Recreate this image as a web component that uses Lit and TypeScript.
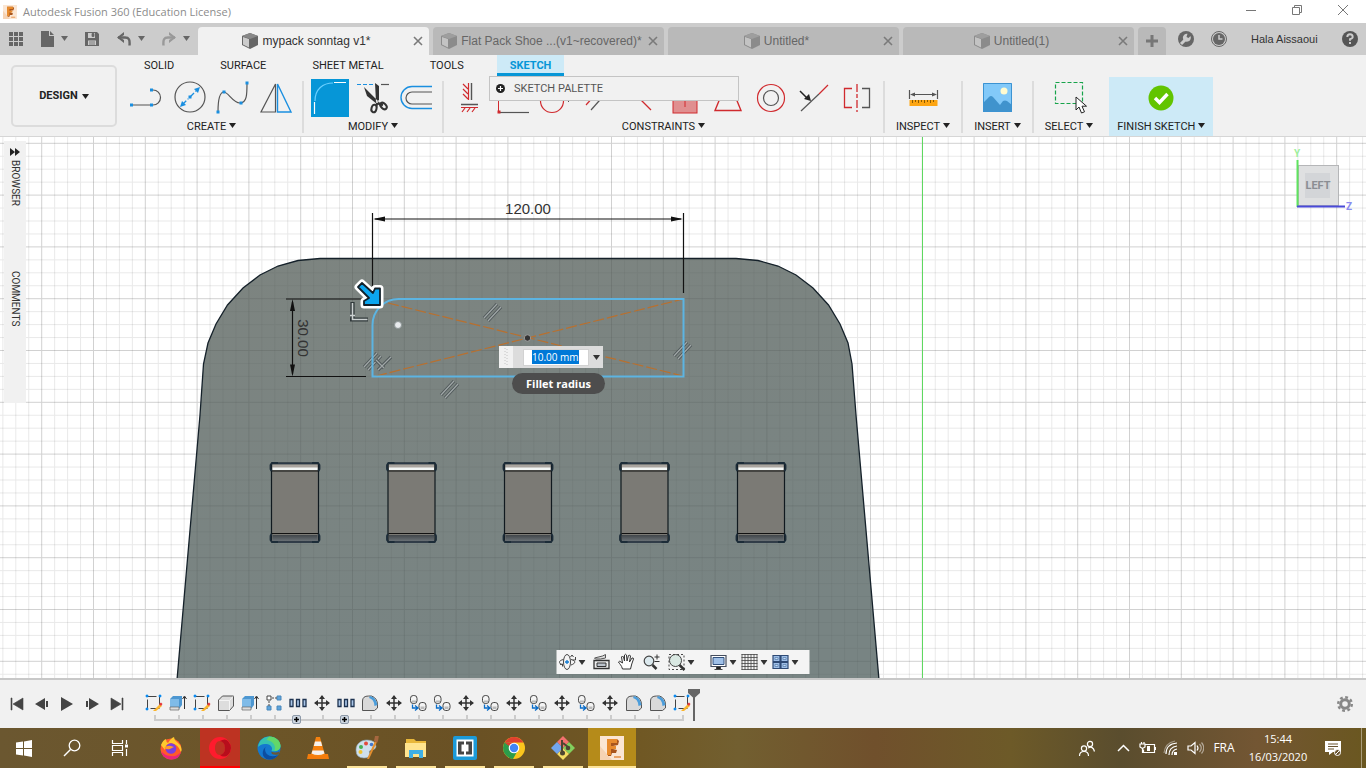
import { LitElement, html, svg, css, type TemplateResult } from "lit";
import { customElement, property, query } from "lit/decorators.js";
import { classMap } from "lit/directives/class-map.js";

type Art = TemplateResult;

const icon = (w: number, h: number, art: Art) =>
  html`<svg class="ico" width=${w} height=${h} viewBox="0 0 ${w} ${h}" aria-hidden="true">${art}</svg>`;

const caret = (cls = "") => html`<svg class="caret ${cls}" width="7" height="5" viewBox="0 0 7 5" aria-hidden="true"><path d="M0 0h7L3.5 5z" fill="currentColor" /></svg>`;

/* ---------- title and tab bar ---------- */

const fusionLogo = svg`
  <rect width="24" height="24" fill="#fbe6d3" />
  <path d="M0 24V10L12 24z" fill="#f6d3b4" />
  <path d="M7 3h10l2 2-1 4-5 1v3l4 1-1 3h-4l-1 3H8z" fill="#a9551c" />
  <path d="M7 3h10v4h-6v3h5v3h-5v6H7z" fill="#e88b2d" />
  <path d="M14 20h7v2h-7z" fill="#eba467" />`;

const apps = svg`${[0, 5, 10].map((y) => [0, 5, 10].map((x) => svg`<rect x=${x} y=${y} width="4" height="4" fill="#666" />`))}`;
const doc = svg`<path d="M0 0h8v5h5v11H0z" fill="#666" /><path d="M9 0l4 4H9z" fill="#666" />`;
const save = svg`<path d="M0 0h12l2 2v12H0z" fill="#666" /><path d="M3 1h7v5H3zM3 8.500h8V13H3z" fill="#ccc" /><path d="M7 1.500h2v3H7zM4 10h6M4 12h6" fill="#666" stroke="#666" stroke-width=".8" />`;
const undo = svg`<path d="M1 5.500h7c4 0 5 2 4.500 8" fill="none" stroke="#666" stroke-width="2.400" /><path d="M7 0v3L3 5.500 7 8v3L0 5.500z" fill="#666" />`;
const redo = svg`<path d="M13 5.500H6c-4 0-5 2-4.500 8" fill="none" stroke="#999" stroke-width="2.400" /><path d="M7 0v3l4 2.500L7 8v3l7-5.500z" fill="#999" />`;
const cube = svg`<path d="M0 3L8 0l8 3v9l-8 4-8-4z" fill="#666" /><path d="M1 4l6 2v8.500L1 11.500z" fill="#ccc" /><path d="M0 3L8 0l8 3-8 3z" fill="#888" />`;
const close = svg`<path d="M1 1l8 8M9 1L1 9" stroke="#7a7a7a" stroke-width="1.600" fill="none" />`;
const wrench = svg`<circle cx="8" cy="8" r="8" fill="#666" /><path d="M3 13l5-5" stroke="#ccc" stroke-width="3" /><path d="M12.500 5a4 4 0 1 1-3-2.300L8.500 6l2 1z" fill="#ccc" />`;
const clock = svg`<circle cx="8" cy="8" r="7.500" fill="none" stroke="#666" /><circle cx="8" cy="8" r="6" fill="#666" /><path d="M8 4v4h3.500" fill="none" stroke="#ccc" stroke-width="1.500" />`;

/* ---------- ribbon ---------- */

const G = "#555";
const B = "#1a8fe0";
const R = "#d02a2e";
const sq = (x: number, y: number, c = B) => svg`<rect x=${x - 1.5} y=${y - 1.5} width="3" height="3" fill=${c} />`;

const create: Art[] = [
  svg`<path d="M3 26h20M23 11h2a7 7 0 0 1 0 15h-2" fill="none" stroke=${G} stroke-width="1.200" />${sq(3.5, 26)}${sq(23.5, 26)}${sq(23.5, 11)}`,
  svg`<circle cx="19" cy="18" r="15" fill="none" stroke=${G} stroke-width="1.200" /><path d="M11 26L27 10" stroke=${B} stroke-width="1.300" stroke-dasharray="6 2 1 2" /><path d="M29 8l-6 2 4 4zM9 28l6-2-4-4z" fill=${B} />${sq(19, 18)}`,
  svg`<path d="M4 33C4 20 6 13 10 13S19 24 26 24 33 15 33 4" fill="none" stroke=${G} stroke-width="1.200" />${sq(4, 33)}${sq(10, 13)}${sq(27, 24)}${sq(33, 4)}`,
  svg`<path d="M18.500 5v28H4z" fill="none" stroke=${G} stroke-width="1.200" /><path d="M20.500 5v28H34z" fill="none" stroke=${B} stroke-width="1.400" />`,
];

const modify: Art[] = [
  svg`<path d="M4 22C4 10 12 4 22 4" fill="none" stroke="#6bd0ff" stroke-width="1.200" /><path d="M23 3.500h12M3.500 23v12" stroke="#fff" stroke-width="1.200" />`,
  svg`<path d="M3 5.500h17" stroke=${B} stroke-width="1.200" stroke-dasharray="4 2" /><path d="M27 5.500h8" stroke=${G} stroke-width="1.200" /><path d="M10 8l3 9 10 8 1.500-2.500zM21 4l4 3v14l-3 2z" fill="#333" /><path d="M23 24l6 2M24 23l-2 4" stroke="#333" stroke-width="2.400" /><ellipse cx="20" cy="29.500" rx="2.500" ry="3.800" fill="none" stroke="#333" stroke-width="2" transform="rotate(15 20 29.500)" /><ellipse cx="29.500" cy="27" rx="2.500" ry="3.800" fill="none" stroke="#333" stroke-width="2" transform="rotate(-45 29.500 27)" /><circle cx="23" cy="23" r="1" fill="#eee" />`,
  svg`<path d="M35 7.500H15a11 11 0 0 0 0 22h20" fill="none" stroke=${B} stroke-width="1.400" /><path d="M35 13h-20a6 6 0 0 0 0 12h20" fill="none" stroke=${G} stroke-width="1.200" />`,
];

const constraints: Art[] = [
  svg`<path d="M17.500 4v17" stroke=${R} stroke-width="1.200" /><path d="M20.500 4v17M10 25.500h17" stroke=${G} stroke-width="1.400" /><path d="M17 10l-5-5M17 15l-5-5M17 20l-5-5M10 28.500h17M14 29l-3 4M19 29l-3 4M24 29l-3 4" stroke=${R} stroke-width="1.200" fill="none" />`,
  svg`<path d="M4.500 5v27" stroke=${R} /><path d="M5 33.500h30" stroke=${G} stroke-width="1.200" />${sq(5, 33, R)}`,
  svg`<circle cx="15" cy="22" r="11.500" fill="none" stroke=${R} stroke-width="1.200" /><path d="M31 23l3-3" stroke=${G} />`,
  svg`<path d="M6 26L22 8" stroke=${R} stroke-width="1.200" /><path d="M11 31L27 13" stroke=${G} stroke-width="1.200" />`,
  svg`<path d="M3 6l25 25" stroke=${R} stroke-width="1.200" />`,
  svg`<rect x="7" y="9" width="24" height="25" fill="#e08f90" stroke=${R} /><path d="M19 15v13" stroke=${R} />`,
  svg`<path d="M6 31.500h26L24 12H14z" fill="none" stroke=${R} stroke-width="1.400" />`,
  svg`<circle cx="19" cy="19" r="13.500" fill="none" stroke=${R} stroke-width="1.200" /><circle cx="19" cy="19" r="7.500" fill="none" stroke=${G} stroke-width="1.200" />`,
  svg`<path d="M6 32l18-17" stroke=${G} stroke-width="1.200" /><path d="M24 15L33 6" stroke=${R} stroke-width="1.200" /><path d="M5 12l7 7" stroke="#222" stroke-width="1.500" /><path d="M16 22l-7-2 5-5z" fill="#222" />`,
  svg`<path d="M14 9.500H6.500v19H14" fill="none" stroke=${R} stroke-width="1.300" /><path d="M19 5v28" stroke=${R} stroke-width="1.300" stroke-dasharray="8 2 4 2" /><path d="M24 9.500h7.500v19H24" fill="none" stroke=${G} stroke-width="1.300" />`,
];

const measure = svg`<rect x="5.500" y="21" width="28" height="6" fill="#fda512" /><path d="M8.500 21v3M11.500 21v2M14.500 21v3M17.500 21v2M20.500 21v3M23.500 21v2M26.500 21v3M29.500 21v2" stroke="#8a5a00" /><path d="M5.500 11v9M33.500 11v9M8 15.500h23" stroke=${G} stroke-width="1.200" /><path d="M6 15.500l5-2v4zM33 15.500l-5-2v4z" fill=${G} />`;
const picture = svg`<rect x="5" y="4" width="29" height="29" fill="#82c9f9" /><path d="M5 24l6-6q2-2 4 0l7 8 3-4q2-1 4 0l5 4v7H5z" fill="#4093cd" /><path d="M5.500 4.500h28v28h-28z" stroke="#3c93d2" fill="none" /><circle cx="26" cy="12" r="3.500" fill="#fffbd0" />`;
const selectBox = svg`<rect x="5.500" y="3.500" width="27" height="21" fill="none" stroke="#16a34a" stroke-width="1.200" stroke-dasharray="4 2" /><path d="M26 18v13l3-3 2.500 6 3-1.200-2.500-5.600h4.500z" fill="#fff" stroke="#222" />`;
const check = svg`<circle cx="19" cy="19" r="12.500" fill="#62c400" /><path d="M13 19l4.500 4.500L25.500 15" stroke="#fff" stroke-width="3.400" fill="none" />`;

/* ---------- timeline ---------- */

const feature: Record<string, Art> = {
  sketch: svg`<path d="M2.500 2.500h12v12h-12z" fill="none" stroke="#444" stroke-dasharray="9 3" /><path d="M1 1h2v2H1zM14 1h2v2h-2zM1 14h2v2H1z" fill="#0a8cf0" stroke="#0a8cf0" stroke-width=".6" /><path d="M9 16l6-6 2 2-6 5H8z" fill="#fbb52c" /><path d="M14 10l2-1.500 1.500 1.500L16 12z" fill="#e5373b" />`,
  extrude: svg`<path d="M1 5l3-3h9v9l-3 4H1z" fill="#4d97d1" /><path d="M1 5h9v8H1z" fill="#7fbbe8" /><path d="M1 13h9v3H1z" fill="#ddd" stroke="#666" stroke-width=".7" /><path d="M15.500 15V3M13.500 5l2-3 2 3" stroke="#333" fill="none" />`,
  body: svg`<path d="M1.500 6l4-4h11v10l-4 4.500h-11z" fill="#ddd" stroke="#555" stroke-linejoin="round" /><path d="M2 6.500h10.500l3.500-4M12.500 6.500V16" fill="none" stroke="#f4f4f4" />`,
  pattern: svg`<path d="M2 2h4v4H2z" fill="#fff" stroke="#444" /><path d="M12 2h4v4h-4zM2 12h4v4H2zM12 12h4v4h-4z" fill="#5ea4dc" stroke="#4b88ba" /><path d="M7 4h5M4 7v5" stroke="#444" stroke-dasharray="2 1" />`,
  row: svg`<path d="M1 5.500h3v7H1zM7.500 5.500h3v7h-3zM14 5.500h3v7h-3z" fill="#a9c6e8" stroke="#1e3350" stroke-width="1.300" />`,
  move: svg`<path d="M9 2v14M2 9h14" stroke="#333" stroke-width="1.500" /><path d="M9 1l3 4H6zM9 17l3-4H6zM1 9l4-3v6zM17 9l-4-3v6z" fill="#333" />`,
  fillet: svg`<path d="M1.500 16.500V7q0-5 6-5h3q6 2 6 9v3l-3 2.500z" fill="#d9d9d9" stroke="#555" /><path d="M9 2q6 1 7.500 9l-3 1Q13 5 8 4z" fill="#4b9ddb" />`,
  joint: svg`<rect x="1.500" y="1.500" width="6.500" height="8" rx="2.800" fill="#f4f4f4" stroke="#444" /><rect x="10" y="8.500" width="7" height="8" rx="2.800" fill="#f4f4f4" stroke="#444" /><path d="M3 6.500h4v2H3zM11.500 12.500h4V15h-4z" fill="#bbb" /><path d="M3.500 10.500v3.500H8M6 11.500L9 14l-3 2.500" fill="none" stroke="#0a6cc8" stroke-width="1.300" />`,
};

const history = "sketch extrude sketch body extrude pattern row move row fillet move joint joint move joint move joint move joint move fillet fillet sketch".split(" ");

const playback: [string, Art][] = [
  ["Go to start", svg`<path d="M3 3h1v12H3zM15 3v12L5 9z" fill="#444" stroke="#444" stroke-width=".6" />`],
  ["Step back", svg`<path d="M12 3v12L2 9zM13 6h2v6h-2z" fill="#444" />`],
  ["Play", svg`<path d="M3 2v14l12-7z" fill="#444" />`],
  ["Step forward", svg`<path d="M6 3v12l10-6zM3 6h2v6H3z" fill="#444" />`],
  ["Go to end", svg`<path d="M14 3h1v12h-1zM3 3v12l10-6z" fill="#444" stroke="#444" stroke-width=".6" />`],
];

const gear = svg`<circle cx="8" cy="8" r="4.300" fill="none" stroke="#888" stroke-width="3" /><circle cx="8" cy="8" r="6.800" fill="none" stroke="#888" stroke-width="2.400" stroke-dasharray="2.800 2.540" />`;

/* ---------- view navigation ---------- */

const nav: { label: string; art: Art; menu?: boolean }[] = [
  { label: "Orbit", menu: true, art: svg`<ellipse cx="8.500" cy="9" rx="3.500" ry="7.500" fill="none" stroke="#444" /><path d="M5 6.500C0 7.500 0 10 3 11.500M12.500 6.500c5 1 5 4 0 5.500" fill="none" stroke="#444" /><path d="M8.500 7v4M6.500 9h4" stroke="#1079d0" stroke-width="1.300" /><path d="M4 13.500V11L1.500 11.500M12 4l1.500-2L15 4M14 7h3V4" fill="none" stroke="#444" />` },
  { label: "Look at", art: svg`<path d="M1.500 7.500h15v8h-15z" fill="#eee" stroke="#333" stroke-width="1.300" /><path d="M4.500 10h9v3.500h-9z" fill="#bcc3cc" stroke="#333" /><path d="M2 5l8-2 3-1.500V5L8 6H3z" stroke="#555" fill="#ddd" />` },
  { label: "Pan", art: svg`<path d="M5 16C4 12 2 11 1 9q1-1.500 2.500 0L5 10 4 4q1-2 2 0l1 4V2q1.200-1.500 2 0l.5 6L11 2.500q1.500-1 2 .5L12 9l2.500-4q1.500-.5 1.500 1-2 5-3 10z" fill="#fff" stroke="#333" />` },
  { label: "Zoom", art: svg`<circle cx="6.500" cy="8" r="4.800" fill="#dce9ee" stroke="#444" stroke-width="1.200" /><path d="M10 12l4 4" stroke="#333" stroke-width="2.500" /><path d="M12 4h5M14.500 1.500v5M12 8.500h5" stroke="#333" />` },
  { label: "Fit", menu: true, art: svg`<path d="M1.500 1.500h15v15h-15z" fill="none" stroke="#444" stroke-dasharray="2 2" /><circle cx="8" cy="7.500" r="6" fill="#d9e8e2" stroke="#444" /><path d="M12 12l5 5" stroke="#333" stroke-width="2.500" />` },
  { label: "Display settings", menu: true, art: svg`<path d="M1.500 2.500h15v11h-15z" fill="#fff" stroke="#444c5c" stroke-width="1.200" /><path d="M3.500 4.500h11v7h-11z" fill="#9fc0e8" stroke="#33517c" /><path d="M7 14h4v2H7zM5 16.500h8" stroke="#444" />` },
  { label: "Grid and snaps", menu: true, art: svg`<path d="M1 1.500h16M1 4.500h16M1 7.500h16M1 10.500h16M1 13.500h16M1 16.500h16M1.500 1v16M4.500 1v16M7.500 1v16M10.500 1v16M13.500 1v16M16.500 1v16" stroke="#444" stroke-width=".8" />` },
  { label: "Viewports", menu: true, art: svg`<path d="M1.500 2.500h7v6h-7zM9.500 2.500h7v6h-7zM1.500 9.500h7v6h-7zM9.500 9.500h7v6h-7z" fill="#9fbfe8" stroke="#2e4a75" stroke-width="1.200" /><path d="M3.500 4.500h3v2h-3zM11.500 4.500h3v2h-3zM3.500 11.500h3v2h-3zM11.500 11.500h3v2h-3z" fill="#c5daf4" stroke="#557cab" stroke-width=".7" />` },
];

/* ---------- taskbar ---------- */

const shell: [string, Art][] = [
  ["Start", svg`<path d="M4 6.500L11 5.500V12H4zM12 5.400L20 4v8h-8zM4 13h7v6.500l-7-1zM12 13h8v8l-8-1.400z" fill="#fff" />`],
  ["Search", svg`<circle cx="14.500" cy="9.500" r="5.300" fill="none" stroke="#fff" stroke-width="1.300" /><path d="M10.500 13.500L4 20" stroke="#fff" stroke-width="1.400" />`],
  ["Task view", svg`<path d="M4.500 4v3.500h10V4M4.500 20v-3.500h10V20M4.500 9.500h10v5h-10zM18.500 4v4M18.500 13v7" fill="none" stroke="#fff" stroke-width="1.200" /><path d="M17 8.500h3v3h-3z" fill="#fff" />`],
];

const programs: { name: string; state: string; art: Art }[] = [
  { name: "Firefox", state: "", art: svg`<circle cx="12" cy="13" r="10.500" fill="#ff5a2a" /><path d="M2 9Q4 4 7 3q0 3 2 4 3-5 6-6 0 3 3 5 6 5 4 10-3-8-10-9Q6 8 6 14z" fill="#ffc92e" /><path d="M2 15q2 8 10 8.500T22 16q-4 5-10 4-6 0-10-5z" fill="#e8257c" /><circle cx="12" cy="12.500" r="5.300" fill="#7a3fe0" /><path d="M5 12q3-3 7-2l3 1-4 2q-3 1-6-1z" fill="#ff9a2a" />` },
  { name: "Opera", state: "opera", art: svg`<path fill-rule="evenodd" d="M12 1a11 11 0 1 0 0 22 11 11 0 1 0 0-22zm0 4c3.500 0 5 3.500 5 7s-1.500 7-5 7-5-3.500-5-7 1.500-7 5-7z" fill="#ff1b2d" /><path d="M12 5Q17 2 20 5q6 7 0 14-4 3-8 0 5-1 5-7t-5-7z" fill="#b70e1c" />` },
  { name: "Edge", state: "", art: svg`<circle cx="12" cy="12" r="11.500" fill="#1478cf" /><path d="M1 11C2 4 7 .5 12 .5 19 .5 23.500 5 23.500 10c0 4-4 6-9 5 2-3-1-7-5-7-4-.5-7 1-8.500 3z" fill="#35c1b1" /><path d="M12 .5c7 0 11.500 4.500 11.500 9.500 0 3-3 5-6 5 2-6-2-10-8-11z" fill="#62d769" /><path d="M8 13c0 6 6 9 13 6-2 3-5 4.500-9 4.500C4 23 4 13 10 10q-2 1-2 3z" fill="#0c4da0" /><path d="M14 15.500q4 2 8.500 0l-1 3q-8 1-7-3z" fill="#6c5733" />` },
  { name: "VLC", state: "", art: svg`<path d="M2 18h20l1 5H1z" fill="#f47c0b" /><path d="M10 1h4l5 18q-7 4-14 0z" fill="#f5810f" /><path d="M9 5.500h6l1.200 4.500H7.800zM6.500 14.500h11l1 3q-6.500 3-13 0z" fill="#f5f1ec" />` },
  { name: "Paint", state: "open", art: svg`<path d="M1 14C1 7 7 4 12 4q9 0 9 7-1 3-5 3-3 1-1 4 0 4-6 4-8 0-8-8z" fill="#cfe0ec" stroke="#8aa5b8" stroke-width=".6" /><circle cx="6" cy="11" r="2" fill="#45ae52" /><circle cx="11" cy="7.500" r="2" fill="#e34a3c" /><circle cx="5.500" cy="16" r="2" fill="#f2c431" /><circle cx="16.500" cy="8.500" r="1.800" fill="#4277cf" /><path d="M20 5l2 1-8 17h-2z" fill="#e38f2f" /><path d="M19 5l1-5 4-1-1 6-1 2z" fill="#a6673f" />` },
  { name: "File Explorer", state: "open", art: svg`<path d="M2 3h8l2 2h10v16H2z" fill="#e8b73a" /><path d="M3 7h19v14H1V7z" fill="#ffe48f" /><path d="M5 22v-8h14v8h-4v-4H9v4z" fill="#3fb0e6" />` },
  { name: "Brackets", state: "open", art: svg`<rect width="24" height="24" rx="2" fill="#1c9ad8" /><rect x="3.500" y="3.500" width="17" height="17" fill="#fff" /><path d="M5 5.500h6v3H8.500v7H11v3H5zM13 5.500h6v13h-6v-3h2.500v-7H13z" fill="#454545" />` },
  { name: "Chrome", state: "open", art: svg`<circle cx="12" cy="12" r="11" fill="#fbc51d" /><path d="M2.500 6.500A11 11 0 0 1 21.500 6.500H12z" fill="#e0402f" /><path d="M2.500 6.500a11 11 0 0 0 8.500 16.400L16 14l-8 0z" fill="#2c9c4b" /><path d="M2.500 6.500l5 8.500L12 7z" fill="#2c9c4b" /><path d="M2.500 6.500H12L7 10z" fill="#e0402f" /><circle cx="12" cy="12" r="5.300" fill="#fff" /><circle cx="12" cy="12" r="4.200" fill="#4285f4" />` },
  { name: "Git", state: "open", art: svg`<path d="M12 0l6 6-6 6-6-6z" fill="#f3716f" /><path d="M18 6l6 6-6 6-6-6z" fill="#82d05d" /><path d="M12 12l6 6-6 6-6-6z" fill="#f5dc63" /><path d="M6 6l6 6-6 6-6-6z" fill="#72a5ee" /><path d="M11 4v13M12 7l5 4" stroke="#4e4532" stroke-width="2" /><circle cx="17" cy="12" r="2.300" fill="#4e4532" /><circle cx="11.500" cy="17" r="2.500" fill="#4e4532" />` },
  { name: "Fusion 360", state: "active", art: fusionLogo },
];

const tray: [string, Art][] = [
  ["People", svg`<circle cx="6" cy="9.500" r="2.600" /><path d="M1.500 17q0-4.500 4.500-4.500T10.500 17" /><circle cx="12" cy="5" r="2.600" /><path d="M10 9q5-2.500 6.500 3.500" />`],
  ["Show hidden icons", svg`<path d="M4 12l5.500-5.500L15 12" stroke-width="1.500" />`],
  ["Battery", svg`<path d="M7 5.500h9.500v8H5.500v-3M17.500 8v3" /><path d="M9 7h3v5H9z" fill="#fff" stroke="none" /><path d="M2 5h5v3L4.500 9.500 2 8zM3.500 3v2M6 3v2M4.500 9v5" />`],
  ["Network", svg`<path d="M4 15Q4 5 15 4M7 16q0-8 8-9M10 16q0-5 5-6" /><path d="M12 13h3v3h-3z" fill="#fff" stroke="none" /><path d="M2 14Q3 4 13 2" opacity=".4" />`],
  ["Volume", svg`<path d="M2 7h3l4-3.500v11L5 11H2z" /><path d="M11 6.500q2 2.500 0 5" /><path d="M13.500 5q3.500 4 0 8M15.500 3.500q4.500 5.500 0 11" opacity=".5" />`],
];

/* ---------- drawing area ---------- */

const STEP = 51.8;
const minors = [1, 2, 3].map((n) => (n * STEP) / 4 + 0.5);

const parallel = (x: number, y: number) => svg`<g transform="translate(${x} ${y})"><path d="M-8 6L5-8M-4 9L9-5" stroke="#50585a" stroke-width="3.200" /><path d="M-8 6L5-8M-4 9L9-5" stroke="#a0a7a7" stroke-width="1.200" /></g>`;

const slot = (x: number) => svg`<g transform="translate(${x} 326)" stroke-linejoin="round">
  <rect x="-23.500" y="0" width="47" height="79" fill="#7b7a75" stroke="#10191f" stroke-width="1.200" />
  <rect x="-22.500" y="1.500" width="45" height="4" fill="#aaa59f" />
  <rect x="-22.500" y="4.500" width="45" height="2.500" fill="#f2f6f5" />
  <path d="M-23 8h46M-23 70.500h46" stroke="#111" />
  <rect x="-22.500" y="72" width="45" height="6" fill="url(#lip)" />
  <path d="M-23 .5h46M-23 79h46" stroke="#2b3947" stroke-width="1.600" />
  ${[-1, 1].map((s) => svg`<g transform="scale(${s} 1)"><path d="M17 0h6l1.500 2v4l-1 2M17 79h6l1.500-2v-4l-1-2" fill="none" stroke="#1c2c38" stroke-width="1.800" /></g>`)}
</g>`;

@customElement("ribbon-group")
class RibbonGroup extends LitElement {
  @property() label = "";
  @property({ attribute: false }) items: Art[] = [];
  @property({ type: Boolean }) first = false;

  static styles = css`
    :host { display: flex; flex-direction: column; align-items: center; }
    .row { display: flex; gap: 5px; }
    button { border: 0; padding: 0; margin: 0; background: none; color: inherit; font: inherit; display: block; }
    .tool { width: 38px; height: 38px; }
    .on { background: #0696d7; }
    .menu { display: flex; align-items: center; gap: 3px; height: 19px; white-space: nowrap; }
    .caret { margin-bottom: 2px; }
  `;

  render() {
    return html`
      <div class="row">
        ${this.items.map((art, i) => html`<button aria-label="${this.label} tool ${i + 1}" class=${classMap({ tool: true, on: this.first && i === 0 })}>${icon(38, 38, art)}</button>`)}
      </div>
      <button class="menu">${this.label}${caret()}</button>
    `;
  }
}

@customElement("app-root")
class AppRoot extends LitElement {
  @query(".value") valueBox!: HTMLInputElement;

  firstUpdated() {
    this.valueBox.focus();
    this.valueBox.select();
  }

  static styles = css`
    :host { display: flex; flex-direction: column; height: 100vh; overflow: hidden; font: 12px/16px "Liberation Sans", Arial, sans-serif; color: #333; background: #f1f1f1; }
    * { box-sizing: border-box; }
    button { border: 0; padding: 0; margin: 0; background: none; color: inherit; font: inherit; display: flex; align-items: center; justify-content: center; }
    svg { display: block; flex: none; }

    .title { display: flex; align-items: center; height: 23px; padding-left: 3px; background: #fff; color: #8c8c8c; flex: none; font: 11px/16px "Open Sans", sans-serif; }
    .title h1 { flex: 1; margin: 0 0 0 6px; font: inherit; }
    .title button { width: 46px; height: 20px; align-self: flex-start; }

    .tabs { display: flex; height: 32px; background: #ccc; flex: none; }
    .quick { display: flex; align-items: center; width: 198px; padding: 0 8px 1px 9px; justify-content: space-between; }
    .quick div { display: flex; align-items: center; gap: 7px; }
    .quick .caret { color: #666; }
    .docs { flex: 1; display: flex; gap: 4px; padding-top: 4px; }
    .doc { flex: 1; min-width: 0; display: flex; align-items: center; padding: 0 4px; border-radius: 4px 4px 0 0; background: #b9b9b9; color: #666; }
    .doc.current { background: #f1f1f1; color: #333; }
    .doc .name { flex: 1; gap: 4px; white-space: nowrap; height: 28px; }
    .doc .x { width: 14px; height: 28px; }
    .doc:not(.current) .name svg { opacity: .55; }
    .plus { width: 28px; border-radius: 4px 4px 0 0; background: #b9b9b9; }
    .user { display: flex; align-items: center; gap: 17px; width: 200px; padding: 0 9px 0 12px; font-size: 11px; justify-content: space-between; }
    .user span { margin: 0 7px; white-space: nowrap; }

    .ribbon { position: relative; display: flex; height: 82px; border-bottom: 1px solid #d6d6d6; flex: none; font: 11px/16px Roboto, sans-serif; color: #222; }
    .design { width: 106px; height: 62px; margin: 10px 4px 0 11px; border: 2px solid #dcdcdc; border-radius: 5px; gap: 4px; font-weight: 700; }
    .work { display: flex; flex-direction: column; }
    .modes { display: flex; flex: none; gap: 20px; height: 24px; padding-left: 10px; }
    .modes a { height: 21px; padding: 3px 13px 0; color: inherit; text-decoration: none; }
    .modes a.on { background: #cdeaf7; border-bottom: 3px solid #0696d7; color: #0696d7; font-weight: 700; }
    .groups { display: flex; flex: none; height: 57px; }
    .groups ribbon-group { padding: 0 7px; }
    .groups .wide { padding: 0 11px; }
    .groups .finish { background: #cdeaf7; padding: 2px 8px 0; margin: -2px 0 0 5px; }
    .sep { width: 2px; height: 52px; margin-top: 2px; background: #dcdcdc; }
    .palette { position: absolute; left: 489px; top: 21px; width: 250px; height: 25px; display: flex; align-items: center; justify-content: flex-start; gap: 9px; padding-left: 6px; border: 1px solid #c4c4c4; background: #f1f1f1; color: #555; }

    .canvas { position: relative; flex: 1; min-height: 0; overflow: hidden; background: #fff; }
    .scene { position: absolute; inset: 0; width: 100%; height: 100%; }
    .dim { font: 15px "Liberation Sans", sans-serif; fill: #333; }
    .side { position: absolute; left: 4px; top: 4px; width: 22px; height: 262px; background: #f1f1f1; writing-mode: vertical-rl; display: flex; align-items: center; padding-top: 7px; font: 10px/16px Roboto, sans-serif; }
    .side button { line-height: 20px; }
    .side .browser { height: 60px; margin: 4px 0 51px; justify-content: flex-start; }
    .viewcube { position: absolute; right: 6px; top: 8px; }
    .cubeface { font: 700 11px Roboto, sans-serif; fill: #8b8e93; }
    .axis { font: 700 10px Roboto, sans-serif; }

    .entry { position: absolute; left: 499px; top: 209px; display: flex; align-items: center; width: 104px; height: 22px; background: #dcdcdc; }
    .grip { width: 14px; height: 22px; background: #f1f1f1; display: flex; align-items: center; justify-content: center; margin-right: 10px; }
    .value { width: 66px; height: 17px; border: 1px solid #d2d2d2; padding: 0 0 0 8px; outline: 0; background: #fff; font: 10px/14px "Open Sans", sans-serif; color: #222; }
    .value::selection { background: #0078d7; color: #fff; }
    .entry button { flex: 1; height: 22px; }
    .tip { position: absolute; left: 512px; top: 236px; padding: 0 14px; height: 21px; border-radius: 11px; background: #4d4d4d; color: #fff; font: 700 11px/21px "Open Sans", sans-serif; white-space: nowrap; }

    .nav { position: absolute; left: 50%; bottom: 4px; transform: translateX(-50%); width: 253px; height: 24px; display: flex; align-items: center; gap: 7px; padding-left: 2px; background: #f4f4f4; }
    .nav button { gap: 2px; }
    .nav .fit { margin-right: 8px; }
    .nav .view { margin-right: -3px; }

    .timeline { display: flex; height: 50px; border-top: 2px solid #c8c8c8; padding: 0 13px 0 7px; flex: none; }
    .play { display: flex; gap: 5px; margin-top: 15px; width: 135px; }
    .play button { width: 20px; height: 18px; }
    .track { display: flex; padding-top: 10px; }
    .track button { position: relative; display: flex; align-items: center; width: 24px; height: 31px; padding: 0 3px 3px; border-bottom: 2px solid #ccc; }
    .track button::after { content: ""; position: absolute; left: 12px; bottom: 0; width: 2px; height: 4px; background: #ccc; }
    .track button:first-child { width: 12px; padding: 0 0 3px; margin-left: 12px; overflow: visible; justify-content: flex-start; }
    .track button:first-child .ico { margin-left: -9px; }
    .track button:first-child::after { left: 0; }
    .track button:last-of-type { width: 14px; justify-content: flex-start; }
    .marker { margin: -1px 0 0 4px; }
    .badge { position: absolute; left: 6px; top: 25px; width: 9px; height: 9px; z-index: 1; border: 1px solid #8d99a8; background: #cdd6e0; border-radius: 2px; }
    .gear { margin-left: auto; }

    .taskbar { display: flex; height: 40px; flex: none; color: #fff; font: 12px/18px "Open Sans", sans-serif; background: linear-gradient(90deg, #6b5730 0, #6c5528 20%, #6a5124 35%, #705824 47%, #725f30 54%, #70502c 64%, #6d5a28 74%, #5a4d2e 82%, #735633 92%, #6a5720); }
    .shell { width: 48px; height: 40px; }
    .programs { display: flex; gap: 1px; margin-left: 3px; flex: 1; }
    .programs button { width: 48px; height: 40px; }
    .face { display: flex; align-items: center; justify-content: center; width: 40px; height: 40px; border-bottom: 2px solid transparent; padding-top: 2px; flex: none; }
    .open { border-color: #fde49a; }
    .opera { background: #bd3322; border-color: #f00; }
    .active { width: 48px; background: #b58b1a; border-color: #fde49a; }
    .status { display: flex; align-items: center; }
    .status button { width: 24px; height: 40px; }
    .status .people { margin-right: 12px; }
    .lang { width: 34px; font-size: 12px; text-align: center; }
    .when { width: 74px; text-align: center; font-size: 11px; }
    .notes { margin: 0 16px 0 6px; }
    .edge { width: 5px; height: 40px; border-left: 1px solid #a99c7a; }
  `;

  private docTab(name: string, current = false) {
    return html`<div class=${classMap({ doc: true, current })}>
      <button class="name">${icon(16, 16, cube)}<span>${name}</span></button>
      <button class="x" aria-label="Close ${name}">${icon(10, 10, close)}</button>
    </div>`;
  }

  private scene() {
    const outline = "M177 543L200 278 203.500 227 208 206 216 187 227.500 168 243 151 260 138 278 129 298 123.500 320 121.500H736L758 123.500 778 129 796 138 813 151 828.500 168 840 187 848 206 852 227 856 278 879 543";
    return html`<svg class="scene" role="img" aria-label="Sketch with 120.00 by 30.00 rectangle">
      <defs>
        <pattern id="grid" x="41.200" y="5.800" width=${STEP} height=${STEP} patternUnits="userSpaceOnUse">
          ${minors.map((m) => svg`<path d="M${m} 0v52M0 ${m}h52" stroke="#000" stroke-opacity=".085" />`)}
          <path d="M.5 0v52M0 .5h52" stroke="#000" stroke-opacity=".18" />
        </pattern>
        <linearGradient id="lip" x2="0" y2="1"><stop stop-color="#41464a" /><stop offset="1" stop-color="#697075" /></linearGradient>
        <linearGradient id="plate" x2=".3" y2="1"><stop stop-color="#7d8480" /><stop offset="1" stop-color="#788483" /></linearGradient>
      </defs>
      <rect width="100%" height="100%" fill="url(#grid)" />
      <path d="M922.500 0v600" stroke="#5fd860" />
      <path d=${outline} fill="url(#plate)" />
      <path d=${outline} fill="url(#grid)" opacity=".5" />
      <path d=${outline} fill="none" stroke="#15212a" stroke-width="1.300" />

      ${[295, 411.5, 528, 644.5, 761].map(slot)}

      <g stroke="#b8702f" stroke-dasharray="11 3" stroke-width="1.200"><path d="M376 239L683 162M388 166L683 239" /></g>
      ${[[492, 175], [682, 213], [449, 252], [372, 224]].map(([x, y]) => parallel(x, y))}
      <path d="M376 223l8 8M378 233l13-13" stroke="#50585a" stroke-width="3.200" /><path d="M376 223l8 8M378 233l13-13" stroke="#a0a7a7" stroke-width="1.200" />
      <path d="M372.500 239.500V188a26 26 0 0 1 26-26H683.500v77.500z" fill="none" stroke="#5cb4e2" stroke-width="2" />

      <g stroke="#111" fill="none"><path d="M372.500 76v73M683.500 76v80M375 82h306" stroke-width="1.200" /><path d="M286 162h78M286 239.500h80M292.500 165v72" stroke-width="1.200" /></g>
      <path d="M373 82l12-2.500v5zM683 82l-12-2.500v5zM292.500 162l-2.500 12h5zM292.500 239.500l-2.500-12h5z" fill="#111" />
      <text class="dim" x="528" y="77" text-anchor="middle">120.00</text>
      <text class="dim" text-anchor="middle" transform="translate(298 201) rotate(90)">30.00</text>

      <path d="M352.500 165v19M350 182.500h18" stroke="#30383a" stroke-width="4.200" /><path d="M352.500 166v16.500h15M350 178.500h5" stroke="#ccd1d1" stroke-width="1.600" fill="none" />
      <path d="M358 150L362 146 373 156 375 151.500H380V168L364 168V164L369 161z" fill="#fff" stroke="#fff" stroke-width="7" stroke-linejoin="round" />
      <path d="M358 150L362 146 373 156 375 151.500H380V168L364 168V164L369 161z" fill="#0ca6ef" stroke="#12212b" stroke-width="1.800" stroke-linejoin="round" />
      <circle cx="398" cy="188" r="3.500" fill="#e8ebee" stroke="#8d9696" />
      <circle cx="527.500" cy="201" r="3.200" fill="#333" stroke="#aaa" stroke-width=".8" />
    </svg>`;
  }

  render() {
    return html`
      <header class="title">
        <svg width="14" height="14" viewBox="0 0 24 24" aria-hidden="true">${fusionLogo}</svg>
        <h1>Autodesk Fusion 360 (Education License)</h1>
        <button aria-label="Minimize">${icon(12, 12, svg`<path d="M1 6.500h10" stroke="#777" />`)}</button>
        <button aria-label="Restore">${icon(12, 12, svg`<path d="M1.500 3.500h7v7h-7zM3.500 3V1.500h7v7H9" fill="none" stroke="#777" />`)}</button>
        <button aria-label="Close">${icon(12, 12, svg`<path d="M1 1l10 10M11 1L1 11" stroke="#777" />`)}</button>
      </header>

      <nav class="tabs">
        <div class="quick">
          <button aria-label="Data panel">${icon(14, 14, apps)}</button>
          <div><button aria-label="File">${icon(13, 16, doc)}</button>${caret()}</div>
          <button aria-label="Save">${icon(14, 14, save)}</button>
          <div><button aria-label="Undo">${icon(14, 14, undo)}</button>${caret()}</div>
          <div><button aria-label="Redo">${icon(14, 14, redo)}</button>${caret()}</div>
        </div>
        <div class="docs">
          ${this.docTab("mypack sonntag v1*", true)}${this.docTab("Flat Pack Shoe ...(v1~recovered)*")}${this.docTab("Untitled*")}${this.docTab("Untitled(1)")}
          <button class="plus" aria-label="New tab">${icon(14, 14, svg`<path d="M7 1v12M1 7h12" stroke="#777" stroke-width="3" />`)}</button>
        </div>
        <div class="user">
          <button aria-label="Extensions">${icon(16, 16, wrench)}</button>
          <button aria-label="Job status">${icon(16, 16, clock)}</button>
          <span>Hala Aissaoui</span>
          <button aria-label="Help">
            <svg width="16" height="16" viewBox="0 0 16 16"><circle cx="8" cy="8" r="8" fill="#555" /><path d="M5.300 6q0-2.700 2.700-2.700T10.700 6Q10.700 7.400 8 8.200v1.600" fill="none" stroke="#ccc" stroke-width="1.900" /><path d="M7 11h2v2H7z" fill="#ccc" /></svg>
          </button>
        </div>
      </nav>

      <section class="ribbon">
        <button class="design">DESIGN ${caret()}</button>
        <div class="work">
          <nav class="modes">
            ${["SOLID", "SURFACE", "SHEET METAL", "TOOLS", "SKETCH"].map((m) => html`<a href="#" class=${classMap({ on: m === "SKETCH" })}>${m}</a>`)}
          </nav>
          <div class="groups">
            <ribbon-group label="CREATE" .items=${create}></ribbon-group><i class="sep"></i>
            <ribbon-group label="MODIFY" first .items=${modify}></ribbon-group><i class="sep"></i>
            <ribbon-group label="CONSTRAINTS" .items=${constraints}></ribbon-group><i class="sep"></i>
            <ribbon-group class="wide" label="INSPECT" .items=${[measure]}></ribbon-group><i class="sep"></i>
            <ribbon-group class="wide" label="INSERT" .items=${[picture]}></ribbon-group><i class="sep"></i>
            <ribbon-group class="wide" label="SELECT" .items=${[selectBox]}></ribbon-group>
            <ribbon-group class="finish" label="FINISH SKETCH" .items=${[check]}></ribbon-group>
          </div>
        </div>
        <button class="palette">
          ${icon(9, 9, svg`<circle cx="4.500" cy="4.500" r="4.500" fill="#222" /><path d="M4.500 2v5M2 4.500h5" stroke="#fff" stroke-width="1.200" />`)}
          SKETCH PALETTE
        </button>
      </section>

      <main class="canvas">
        ${this.scene()}
        <aside class="side">
          ${icon(10, 8, svg`<path d="M0 0l5 4-5 4zM5 0l5 4-5 4z" fill="#222" />`)}
          <button class="browser">BROWSER</button>
          <button>COMMENTS</button>
        </aside>
        <svg class="viewcube" width="70" height="70" viewBox="0 0 70 70" aria-label="View cube">
          <rect x="8.500" y="20.500" width="40" height="40" fill="#dfe0e1" stroke="#b5b6b8" />
          <rect x="15" y="28" width="25" height="25" fill="#d3d5d8" />
          <text class="cubeface" x="28" y="44" text-anchor="middle">LEFT</text>
          <path d="M7.500 15v47" stroke="#5fe45f" stroke-width="2" /><path d="M7 61.500h48" stroke="#4a4ad8" stroke-width="2" />
          <text class="axis" x="4" y="12" fill="#9bef9b">Y</text><text class="axis" x="56" y="65" fill="#8a8af0">Z</text>
        </svg>
        <div class="entry">
          <span class="grip">${icon(4, 18, svg`<path d="M1 0v18M3 1v17" stroke="#c4c4c4" stroke-dasharray="1 2" />`)}</span>
          <input class="value" aria-label="Fillet radius" value="10.00 mm" />
          <button aria-label="More values">${caret()}</button>
        </div>
        <div class="tip">Fillet radius</div>
        <div class="nav">
          ${nav.map((n, i) => html`<button aria-label=${n.label} class=${classMap({ fit: i === 4, view: i > 4 })}>${icon(18, 18, n.art)}${n.menu ? caret() : ""}</button>`)}
        </div>
      </main>

      <section class="timeline">
        <div class="play">${playback.map(([label, art]) => html`<button aria-label=${label}>${icon(18, 18, art)}</button>`)}</div>
        <div class="track">
          ${history.map((f) => html`<button aria-label=${f}>${icon(18, 18, feature[f])}${f === "row" ? html`<span class="badge">${icon(7, 7, svg`<path d="M3.500 1v5M1 3.500h5" stroke="#000" stroke-width="1.500" />`)}</span>` : ""}</button>`)}
          <svg class="marker" width="12" height="32" viewBox="0 0 12 32" aria-hidden="true"><path d="M0 0h12v4L7 8.500V32H5V8.500L0 4z" fill="#666" /></svg>
        </div>
        <button class="gear" aria-label="Timeline settings">${icon(16, 16, gear)}</button>
      </section>

      <footer class="taskbar">
        ${shell.map(([label, art]) => html`<button class="shell" aria-label=${label}>${icon(24, 24, art)}</button>`)}
        <div class="programs">
          ${programs.map((p) => html`<button aria-label=${p.name}><span class="face ${p.state}">${icon(24, 24, p.art)}</span></button>`)}
        </div>
        <div class="status">
          ${tray.map(([label, art], i) => html`<button aria-label=${label} class=${i === 0 ? "people" : ""}><svg width="18" height="18" viewBox="0 0 18 18" fill="none" stroke="#fff" stroke-width="1.200">${art}</svg></button>`)}
          <span class="lang">FRA</span>
          <time class="when">15:44<br />16/03/2020</time>
          <button class="notes" aria-label="Notifications">${icon(18, 18, svg`<path d="M1 2h16v11H9l-4 3v-3H1z" fill="#fff" /><path d="M4 5h10M4 7.500h10M4 10h6" stroke="#6a5430" /><circle cx="13.500" cy="13.500" r="3" fill="#6a5430" stroke="#fff" /><path d="M11.500 15.500l4-4" stroke="#fff" />`)}</button>
          <i class="edge"></i>
        </div>
      </footer>
    `;
  }
}
